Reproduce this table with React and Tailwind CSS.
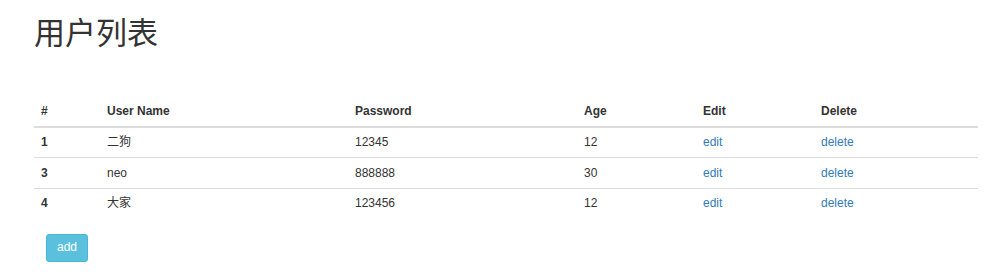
const USERS = [
  { id: 1, name: '二狗', password: '12345', age: 12 },
  { id: 3, name: 'neo', password: '888888', age: 30 },
  { id: 4, name: '大家', password: '123456', age: 12 },
]

export default function App() {
  return (
    <div
      className="bg-white text-[#333] text-[12px] leading-[15.5px] pl-[34px] pr-[22px]"
      style={{ fontFamily: '"Liberation Sans", "Noto Sans CJK SC", sans-serif' }}
    >
      <h1 className="text-[31px] leading-[34px] font-normal mt-[17px] mb-[45px]">用户列表</h1>
      <table className="w-full border-collapse">
        <thead>
          <tr className="border-b-2 border-[#ddd] text-left">
            <th className="w-[66px] px-[7px] pt-[7.5px] pb-[6.5px] font-bold">#</th>
            <th className="w-[248px] px-[7px] pt-[7.5px] pb-[6.5px] font-bold">User Name</th>
            <th className="w-[229px] px-[7px] pt-[7.5px] pb-[6.5px] font-bold">Password</th>
            <th className="w-[119px] px-[7px] pt-[7.5px] pb-[6.5px] font-bold">Age</th>
            <th className="w-[118px] px-[7px] pt-[7.5px] pb-[6.5px] font-bold">Edit</th>
            <th className="px-[7px] pt-[7.5px] pb-[6.5px] font-bold">Delete</th>
          </tr>
        </thead>
        <tbody>
          {USERS.map((u, i) => (
            <tr key={u.id} className={i > 0 ? 'border-t border-[#ddd]' : ''}>
              <td className="px-[7px] pt-[7.5px] pb-[6.5px] font-bold">{u.id}</td>
              <td className="px-[7px] pt-[7.5px] pb-[6.5px]">{u.name}</td>
              <td className="px-[7px] pt-[7.5px] pb-[6.5px]">{u.password}</td>
              <td className="px-[7px] pt-[7.5px] pb-[6.5px]">{u.age}</td>
              <td className="px-[7px] pt-[7.5px] pb-[6.5px]">
                <a href="#" className="text-[#337ab7]">edit</a>
              </td>
              <td className="px-[7px] pt-[7.5px] pb-[6.5px]">
                <a href="#" className="text-[#337ab7]">delete</a>
              </td>
            </tr>
          ))}
        </tbody>
      </table>
      <div className="pl-[12px] pt-[16px] pb-[13px]">
        <button className="bg-[#5bc0de] border border-[#46b8da] text-white rounded-[3px] px-[10px] h-[28px] text-[12px]">
          add
        </button>
      </div>
    </div>
  )
}
